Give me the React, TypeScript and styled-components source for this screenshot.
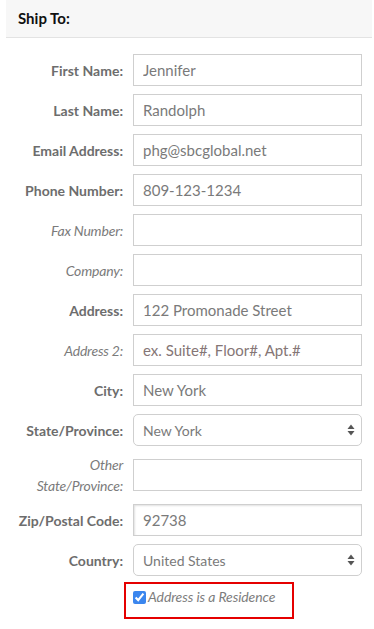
import React from "react";
import styled, { createGlobalStyle } from "styled-components";

const Global = createGlobalStyle`
  html, body { margin: 0; padding: 0; background: #fff; }
  body { font-family: Lato, "Open Sans", Arial, sans-serif; }
  * { box-sizing: border-box; }
`;

const Panel = styled.div`
  margin: 0 2px 0 6px;
  width: 366px;
`;

const Header = styled.div`
  height: 38px;
  background: #f7f7f7;
  border-bottom: 1px solid #e3e3e3;
  display: flex;
  align-items: center;
  padding: 0 0 2px 12px;
  font-family: Lato, sans-serif;
  font-weight: 700;
  font-size: 15px;
  color: #111;
`;

const Form = styled.div`
  display: grid;
  grid-template-columns: 117px 229px;
  column-gap: 10px;
  row-gap: 8px;
  padding-top: 16px;
  align-items: center;
`;

const Label = styled.label<{ $optional?: boolean }>`
  text-align: right;
  font-family: Lato, sans-serif;
  font-size: 14px;
  font-weight: ${(p) => (p.$optional ? 400 : 700)};
  font-style: ${(p) => (p.$optional ? "italic" : "normal")};
  color: ${(p) => (p.$optional ? "#7b7b7b" : "#6d6d6d")};
  line-height: 21px;
  letter-spacing: ${(p) => (p.$optional ? "-0.2px" : "0")};
`;

const TextInput = styled.input<{ $inset?: boolean }>`
  width: 229px;
  height: 32px;
  border: 1px solid #cfcfcf;
  border-radius: 0;
  padding: 0 9px;
  font-family: Lato, sans-serif;
  font-size: 15px;
  color: #7a7a7a;
  background: #fff;
  outline: none;
  box-shadow: ${(p) => (p.$inset ? "inset 1px 1px 2px rgba(0,0,0,0.12)" : "none")};
  &::placeholder {
    color: #857676;
    opacity: 1;
  }
`;

const SelectWrap = styled.div`
  position: relative;
  width: 229px;
  height: 32px;
`;

const Select = styled.select`
  appearance: none;
  -webkit-appearance: none;
  width: 100%;
  height: 32px;
  border: 1px solid #cfcfcf;
  border-radius: 5px;
  padding: 0 24px 0 9px;
  font-family: Lato, sans-serif;
  font-size: 14px;
  color: #7a7a7a;
  background: #fff;
  outline: none;
`;

const Arrows = styled.svg`
  position: absolute;
  right: 7px;
  top: 10px;
  pointer-events: none;
`;

const CheckRow = styled.div`
  grid-column: 1 / span 2;
  margin: -2px 0 0 118px;
  width: 170px;
  height: 37px;
  border: 2px solid #e50000;
  display: flex;
  align-items: flex-start;
  padding: 3px 0 0 7px;
`;

const Check = styled.input`
  width: 13px;
  height: 13px;
  margin: 4px 2px 0 0;
  accent-color: #3b86ee;
`;

const CheckText = styled.span`
  font-family: Lato, sans-serif;
  font-style: italic;
  font-size: 14px;
  color: #7d7d7d;
  line-height: 20px;
  letter-spacing: -0.1px;
`;

type Field = {
  label: React.ReactNode;
  optional?: boolean;
  value?: string;
  placeholder?: string;
  select?: string;
  inset?: boolean;
};

const fields: Field[] = [
  { label: "First Name:", value: "Jennifer" },
  { label: "Last Name:", value: "Randolph" },
  { label: "Email Address:", value: "phg@sbcglobal.net" },
  { label: "Phone Number:", value: "809-123-1234" },
  { label: "Fax Number:", optional: true, value: "" },
  { label: "Company:", optional: true, value: "" },
  { label: "Address:", value: "122 Promonade Street" },
  { label: "Address 2:", optional: true, value: "", placeholder: "ex. Suite#, Floor#, Apt.#" },
  { label: "City:", value: "New York" },
  { label: "State/Province:", select: "New York" },
  {
    label: (
      <>
        Other
        <br />
        State/Province:
      </>
    ),
    optional: true,
    value: "",
  },
  { label: "Zip/Postal Code:", value: "92738", inset: true },
  { label: "Country:", select: "United States" },
];

const ArrowIcon = () => (
  <Arrows width="8" height="12" viewBox="0 0 8 12">
    <path d="M4 0.5 L7.5 5 L0.5 5 Z" fill="#555" />
    <path d="M4 11.5 L7.5 7 L0.5 7 Z" fill="#555" />
  </Arrows>
);

export default function App() {
  return (
    <Panel>
      <Global />
      <Header>Ship To:</Header>
      <Form>
        {fields.map((f, i) => (
          <React.Fragment key={i}>
            <Label $optional={f.optional}>{f.label}</Label>
            {f.select ? (
              <SelectWrap>
                <Select defaultValue={f.select}>
                  <option>{f.select}</option>
                </Select>
                <ArrowIcon />
              </SelectWrap>
            ) : (
              <TextInput
                $inset={f.inset}
                defaultValue={f.value}
                placeholder={f.placeholder}
              />
            )}
          </React.Fragment>
        ))}
        <CheckRow>
          <Check type="checkbox" defaultChecked />
          <CheckText>Address is a Residence</CheckText>
        </CheckRow>
      </Form>
    </Panel>
  );
}
